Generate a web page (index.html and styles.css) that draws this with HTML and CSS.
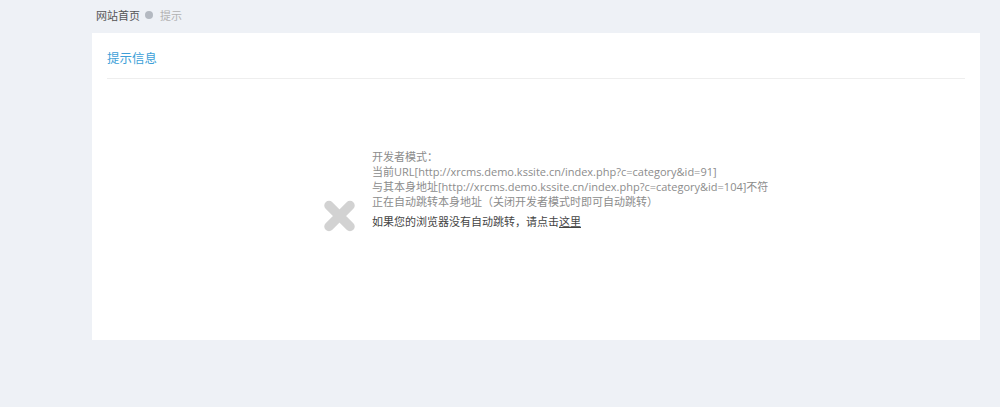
FILE: index.html
```html
<!DOCTYPE html>
<html lang="zh-CN">
<head>
<meta charset="utf-8">
<title>提示信息</title>
<link rel="stylesheet" href="styles.css">
</head>
<body>
<div class="page">
  <div class="crumbs">
    <a class="crumb-home" href="#">网站首页</a>
    <span class="crumb-dot"></span>
    <span class="crumb-cur">提示</span>
  </div>
  <div class="card">
    <div class="card-head">提示信息</div>
    <div class="msg">
      <svg class="msg-icon" width="33" height="34" viewBox="0 0 33 34" aria-hidden="true">
        <path d="M6 6.5 L27 27.5 M27 6.5 L6 27.5" stroke="#d2d2d2" stroke-width="9.5" stroke-linecap="round" fill="none"/>
      </svg>
      <div class="msg-text">
        <div class="msg-line">开发者模式：</div>
        <div class="msg-line">当前URL[http://xrcms.demo.kssite.cn/index.php?c=category&amp;id=91]</div>
        <div class="msg-line">与其本身地址[http://xrcms.demo.kssite.cn/index.php?c=category&amp;id=104]不符</div>
        <div class="msg-line">正在自动跳转本身地址（关闭开发者模式时即可自动跳转）</div>
        <div class="msg-jump">如果您的浏览器没有自动跳转，请点击<a href="#">这里</a></div>
      </div>
    </div>
  </div>
</div>
</body>
</html>
```
FILE: styles.css
```css
html, body {
  margin: 0;
  padding: 0;
}
body {
  background: #eef1f6;
  font-family: "Open Sans", "Noto Sans CJK SC", sans-serif;
  height: 407px;
  overflow: hidden;
}
.page {
  margin-left: 92px;
  width: 888px;
}
.crumbs {
  height: 33px;
  display: flex;
  align-items: center;
  padding-left: 4px;
  padding-bottom: 3px;
  box-sizing: border-box;
  font-size: 11px;
}
.crumb-home {
  color: #555;
  text-decoration: none;
}
.crumb-dot {
  width: 8px;
  height: 8px;
  border-radius: 50%;
  background: #b4b9c1;
  margin: 0 7px 0 5px;
}
.crumb-cur {
  color: #b2b2b2;
}
.card {
  background: #fff;
  height: 307px;
  padding: 0 15px;
}
.card-head {
  height: 46px;
  box-sizing: border-box;
  padding-top: 17px;
  line-height: 18px;
  font-size: 12.5px;
  color: #3d9fd8;
  border-bottom: 1px solid #eeeeee;
}
.msg {
  display: flex;
  align-items: flex-end;
  padding-left: 216px;
  padding-top: 70px;
}
.msg-icon {
  flex: none;
  margin-right: 16px;
  margin-bottom: -4px;
}
.msg-text {
  font-size: 11px;
  line-height: 15px;
  color: #8c8c8c;
}
.msg-jump {
  margin-top: 5px;
  color: #444;
}
.msg-jump a {
  color: #444;
  text-decoration: underline;
}
```
